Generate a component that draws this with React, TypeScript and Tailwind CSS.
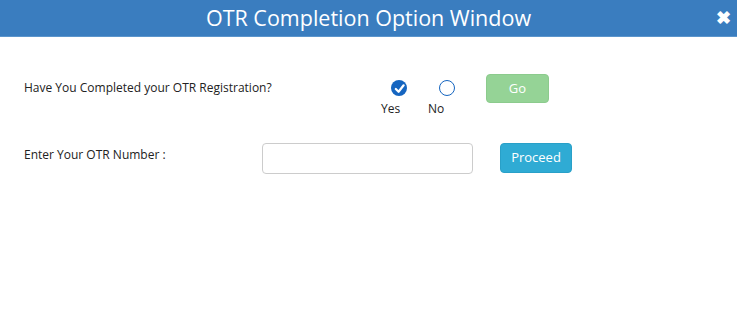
export default function App() {
  return (
    <div className="w-[737px] h-[324px] bg-white overflow-hidden" style={{ fontFamily: '"Open Sans", sans-serif' }}>
      <div className="relative h-[37px] bg-[#3a7dbf] border-b border-[#5b95cc] flex items-center justify-center">
        <span className="text-white text-[21.5px] leading-none">OTR Completion Option Window</span>
        <span className="absolute right-[6px] top-[8px] text-white text-[18px] font-bold leading-none">✖</span>
      </div>
      <div className="pl-[24px] pt-[40px] text-[12px] text-[#222]">
        <div className="flex items-start">
          <div className="w-[357px] pt-[2px]">Have You Completed your OTR Registration?</div>
          <div className="flex flex-col items-start w-[47px] pt-[3px]">
            <span className="ml-[10px] w-[16px] h-[16px] rounded-full bg-[#1565c0] flex items-center justify-center">
              <svg width="11" height="11" viewBox="0 0 12 12">
                <path d="M2 6.5 L5 9.5 L10.5 2.5" stroke="#fff" strokeWidth="2.4" fill="none" strokeLinecap="round" strokeLinejoin="round" />
              </svg>
            </span>
            <span className="mt-[4px]">Yes</span>
          </div>
          <div className="flex flex-col items-start w-[58px] pt-[3px]">
            <span className="ml-[11px] w-[16px] h-[16px] rounded-full border border-[#1565c0] bg-white" />
            <span className="mt-[4px]">No</span>
          </div>
          <button className="mt-[-3px] w-[63px] h-[29px] rounded-[4px] bg-[#95d396] border border-[#8ccb8d] text-white text-[13px]">Go</button>
        </div>
        <div className="flex items-start mt-[25px]">
          <div className="w-[238px] pt-[3px]">Enter Your OTR Number :</div>
          <input className="w-[211px] h-[31px] border border-[#ccc] rounded-[4px] outline-none px-2" />
          <button className="ml-[27px] w-[72px] h-[30px] rounded-[4px] bg-[#2fabd4] border border-[#29a0c8] text-white text-[13px]">Proceed</button>
        </div>
      </div>
    </div>
  )
}
